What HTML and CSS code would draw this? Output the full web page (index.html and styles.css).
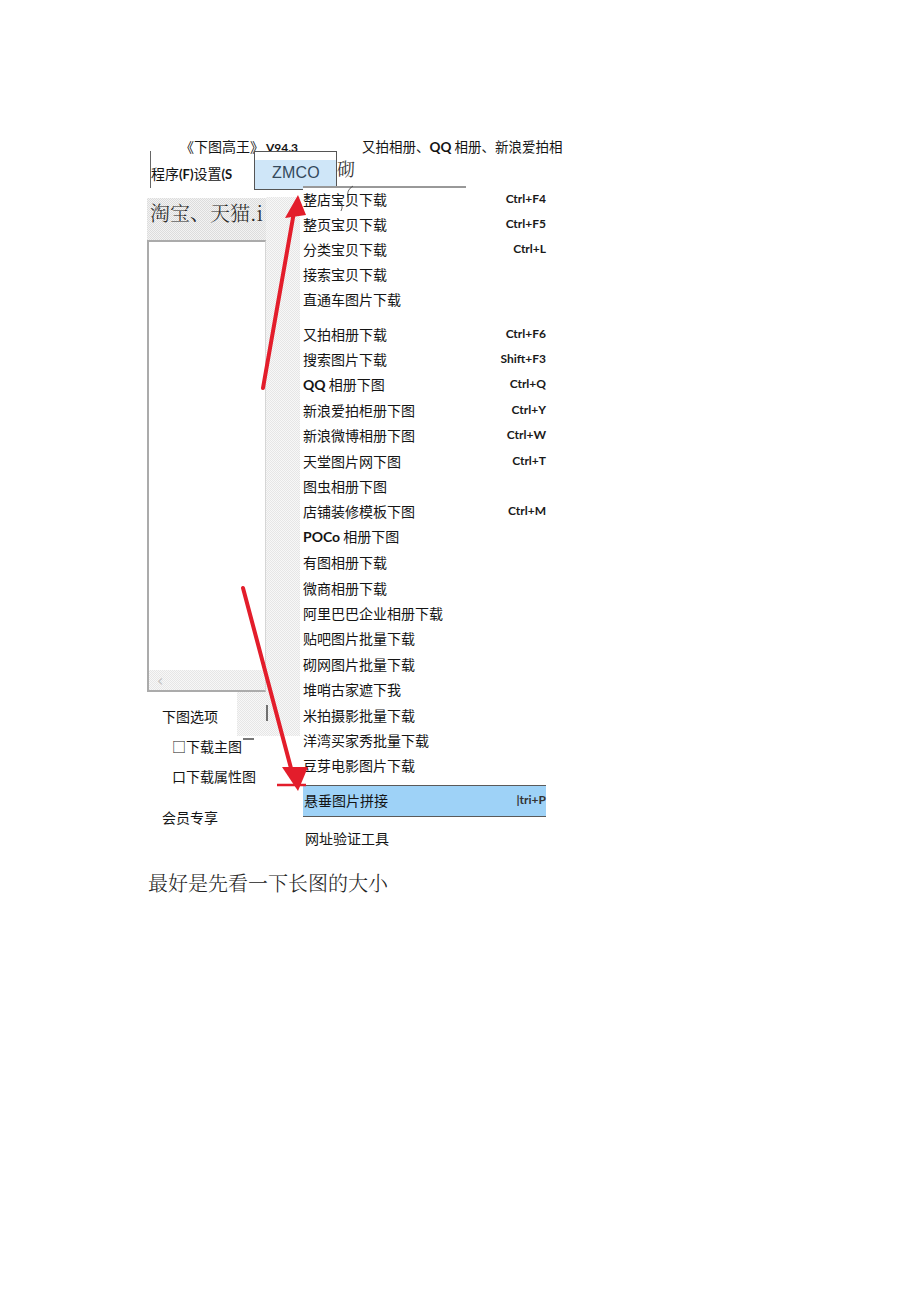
FILE: index.html
```html
<!DOCTYPE html>
<html lang="zh-CN">
<head>
<meta charset="utf-8">
<title>下图高手</title>
<link rel="stylesheet" href="styles.css">
</head>
<body>
<div class="page">
  <div class="titlebar">
    <span class="title">《下图高王》<b class="ver">V94.3</b></span>
    <span class="sites">又拍相册、<b class="lat">QQ</b> 相册、新浪爱拍相</span>
  </div>
  <div class="menubar">
    <div class="prog">程序<b class="lat">(F)</b>设置<b class="lat">(S</b></div>
    <div class="zbox">ZMCO</div>
    <div class="qi">砌</div>
  </div>
  <div class="main">
    <div class="left">
      <div class="upper">
        <div class="col">
          <div class="tabhead dots">淘宝、天猫.i</div>
          <div class="listbox">
            <div class="listarea"></div>
            <div class="hscroll dotslight"><span class="larr">‹</span></div>
          </div>
          <div class="opt1">
            <span class="optlabel">下图选项</span>
            <span class="filler dotslight"></span>
          </div>
        </div>
        <div class="strip dotslight"><span class="tick"></span></div>
      </div>
      <div class="opt opt2">□下载主图<span class="mark"></span></div>
      <div class="opt opt3">口下载属性图</div>
      <div class="opt opt4">会员专享</div>
    </div>
    <div class="menu">
      <div class="group">
        <div class="mi"><span>整店宝贝下载</span><span class="sc">Ctrl+F4</span></div>
        <div class="mi"><span>整页宝贝下载</span><span class="sc">Ctrl+F5</span></div>
        <div class="mi"><span>分类宝贝下载</span><span class="sc">Ctrl+L</span></div>
        <div class="mi"><span>接索宝贝下载</span></div>
        <div class="mi"><span>直通车图片下载</span></div>
      </div>
      <div class="group g2">
        <div class="mi"><span>又拍相册下载</span><span class="sc">Ctrl+F6</span></div>
        <div class="mi"><span>搜索图片下载</span><span class="sc">Shift+F3</span></div>
        <div class="mi"><span><b class="lat">QQ</b> 相册下图</span><span class="sc">Ctrl+Q</span></div>
        <div class="mi"><span>新浪爱拍柜册下图</span><span class="sc">Ctrl+Y</span></div>
        <div class="mi"><span>新浪微博相册下图</span><span class="sc">Ctrl+W</span></div>
        <div class="mi"><span>天堂图片网下图</span><span class="sc">Ctrl+T</span></div>
        <div class="mi"><span>图虫相册下图</span></div>
        <div class="mi"><span>店铺装修模板下图</span><span class="sc">Ctrl+M</span></div>
        <div class="mi"><span><b class="lat">POCo</b> 相册下图</span></div>
        <div class="mi"><span>有图相册下载</span></div>
        <div class="mi"><span>微商相册下载</span></div>
        <div class="mi"><span>阿里巴巴企业相册下载</span></div>
        <div class="mi"><span>贴吧图片批量下载</span></div>
        <div class="mi"><span>砌网图片批量下载</span></div>
        <div class="mi"><span>堆哨古家遮下我</span></div>
        <div class="mi"><span>米拍摄影批量下载</span></div>
        <div class="mi"><span>洋湾买家秀批量下载</span></div>
        <div class="mi"><span>豆芽电影图片下载</span></div>
      </div>
      <div class="mi hl"><span>悬垂图片拼接</span><span class="sc">|tri+P</span></div>
      <div class="mi last"><span>网址验证工具</span></div>
    </div>
  </div>
  <p class="note">最好是先看一下长图的大小</p>
</div>
<svg class="overlay" width="920" height="1301" viewBox="0 0 920 1301" xmlns="http://www.w3.org/2000/svg">
  <line x1="303" y1="187" x2="466" y2="187" stroke="#333" stroke-width="1"/>
  <path d="M353 186 q-7 4 -5 12" fill="none" stroke="#444" stroke-width="0.8"/>
  <path d="M339 202 q5 3 2 9" fill="none" stroke="#444" stroke-width="0.8"/>
  <line x1="263" y1="388" x2="294" y2="212" stroke="#e31d2b" stroke-width="4" stroke-linecap="round"/>
  <polygon points="298,195 285,218 306,215" fill="#e31d2b"/>
  <line x1="243" y1="588" x2="292" y2="772" stroke="#e31d2b" stroke-width="4" stroke-linecap="round"/>
  <polygon points="282,767 308,767 298,791" fill="#e31d2b"/>
  <line x1="277" y1="785" x2="306" y2="785" stroke="#e31d2b" stroke-width="2.5"/>
</svg>
</body>
</html>
```
FILE: styles.css
```css
html, body {
  margin: 0;
  padding: 0;
  background: #fff;
}
body {
  position: relative;
  width: 920px;
  min-height: 1301px;
  font-family: "Noto Sans CJK SC", "Noto Sans", sans-serif;
  color: #141414;
}
.lat {
  font-family: "Lato", "Noto Sans", sans-serif;
  font-weight: 700;
}
.page {
  padding: 137px 0 0 147px;
}
.dots {
  background: repeating-conic-gradient(#dcdcdc 0 25%, #f3f3f3 0 50%) 0 0 / 2px 2px;
}
.dotslight {
  background: repeating-conic-gradient(#e6e6e6 0 25%, #f8f8f8 0 50%) 0 0 / 2px 2px;
}

/* title row */
.titlebar {
  display: flex;
  height: 18px;
  line-height: 18px;
  font-size: 14px;
  white-space: nowrap;
}
.title {
  margin-left: 33px;
}
.ver {
  font-family: "Lato", "Noto Sans", sans-serif;
  font-size: 12px;
  margin-left: 2px;
  text-decoration: underline;
  text-decoration-color: #888;
}
.sites {
  margin-left: 64px;
  font-size: 13.5px;
}

/* menu bar row */
.menubar {
  display: flex;
  height: 33px;
  white-space: nowrap;
}
.prog {
  width: 104px;
  margin-left: 3px;
  border-left: 1px solid #666;
  height: 37px;
  box-sizing: border-box;
  margin-top: -4px;
  padding-top: 12px;
  font-size: 14px;
  line-height: 20px;
}
.prog .lat {
  font-size: 13px;
}
.zbox {
  box-sizing: border-box;
  width: 83px;
  height: 39px;
  margin: -4px 0 -2px;
  border: 1px solid #555;
  background: linear-gradient(#fff 0 8px, #cfe6f8 8px);
  display: flex;
  align-items: center;
  padding: 4px 0 0 17px;
  font-family: "Liberation Sans", Arial, sans-serif;
  font-size: 16px;
  color: #34495c;
  letter-spacing: 0.2px;
}
.qi {
  font-family: "Noto Serif CJK SC", "Noto Sans CJK SC", serif;
  font-size: 18px;
  line-height: 22px;
  margin-top: 2px;
  color: #333;
}

/* main area */
.main {
  display: flex;
  align-items: flex-start;
}
.left {
  width: 153px;
  display: flex;
  flex-direction: column;
}
.upper {
  display: flex;
  align-items: flex-start;
}
.col {
  width: 119px;
}
.tabhead {
  margin-top: 10px;
  height: 42px;
  line-height: 30px;
  padding-left: 3px;
  box-sizing: border-box;
  font-family: "Noto Serif CJK SC", "Noto Sans CJK SC", serif;
  font-weight: 300;
  font-size: 20px;
  color: #2a2a2a;
  white-space: nowrap;
  overflow: hidden;
}
.listbox {
  box-sizing: border-box;
  height: 452px;
  border: 2px solid #ababab;
  border-right: 1px solid #d6d6d6;
  background: #fff;
  display: flex;
  flex-direction: column;
}
.listarea {
  flex: 1;
}
.hscroll {
  height: 20px;
  line-height: 18px;
  padding-left: 8px;
}
.larr {
  color: #c4c4c4;
  font-family: "DejaVu Sans", sans-serif;
  font-size: 16px;
}
.opt1 {
  height: 44px;
  display: flex;
}
.optlabel {
  width: 75px;
  padding: 14px 0 0 15px;
  line-height: 20px;
  font-size: 14px;
  white-space: nowrap;
}
.filler {
  flex: 1;
  height: 44px;
}
.strip {
  width: 34px;
  height: 539px;
  margin-top: 9px;
  box-sizing: border-box;
  padding-top: 508px;
}
.tick {
  display: block;
  width: 2px;
  height: 16px;
  background: #707070;
}
.opt {
  font-size: 14px;
  line-height: 20px;
  white-space: nowrap;
}
.opt2 {
  padding-left: 25px;
}
.mark {
  display: inline-block;
  vertical-align: top;
  width: 11px;
  height: 2px;
  margin: 2px 0 0 1px;
  background: #777;
}
.opt3 {
  padding-left: 25px;
  margin-top: 10px;
}
.opt4 {
  padding-left: 15px;
  margin-top: 21px;
}

/* dropdown menu */
.menu {
  width: 243px;
  margin: -2px 0 0 3px;
  background: #fff;
}
.mi {
  display: flex;
  justify-content: space-between;
  align-items: center;
  height: 25px;
  font-size: 14px;
  line-height: 20px;
  white-space: nowrap;
}
.g2 {
  margin-top: 10px;
}
.g2 .mi {
  height: 25.4px;
}
.sc {
  font-family: "Lato", "Noto Sans", sans-serif;
  font-weight: 700;
  font-size: 12px;
  color: #1a1a1a;
}
.mi.hl {
  box-sizing: border-box;
  height: 32px;
  margin-top: 7px;
  border-top: 1px solid #5a5a5a;
  border-bottom: 1px solid #5a5a5a;
  background: #9ed2f7;
  padding: 0 0 2px 1px;
}
.mi.hl .sc {
  color: #333;
}
.mi.last {
  margin-top: 8px;
  padding-left: 2px;
}

/* footer note */
.note {
  margin: 18px 0 0 1px;
  font-family: "Noto Serif CJK SC", "Noto Sans CJK SC", serif;
  font-weight: 300;
  font-size: 20px;
  line-height: 30px;
  color: #222;
}

.overlay {
  position: absolute;
  left: 0;
  top: 0;
  pointer-events: none;
}
```
